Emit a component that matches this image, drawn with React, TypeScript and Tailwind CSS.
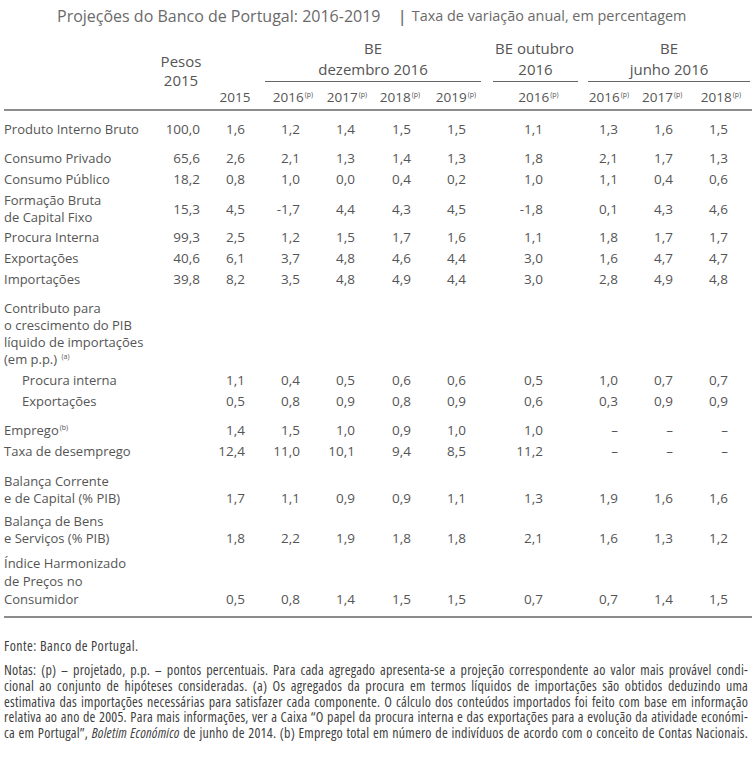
import React from "react";

type Row = {
  label: React.ReactNode[];
  v?: string[];
  mt?: string;
  indent?: boolean;
  align?: "center" | "end";
  lh?: string;
};

const numPad = [
  "pr-[12px]",
  "pr-[20px]",
  "pr-[19px]",
  "pr-[18px]",
  "pr-[16px]",
  "pr-[15px]",
  "pr-[45px]",
  "pr-[24px]",
  "pr-[23px]",
  "pr-[22px]",
];

const Sup = ({ t }: { t: string }) => (
  <span className="text-[7px] leading-none align-super ml-[1px]">{t}</span>
);

const rows: Row[] = [
  { label: ["Produto Interno Bruto"], v: ["100,0", "1,6", "1,2", "1,4", "1,5", "1,5", "1,1", "1,3", "1,6", "1,5"], mt: "mt-[8px]" },
  { label: ["Consumo Privado"], v: ["65,6", "2,6", "2,1", "1,3", "1,4", "1,3", "1,8", "2,1", "1,7", "1,3"], mt: "mt-[8px]" },
  { label: ["Consumo Público"], v: ["18,2", "0,8", "1,0", "0,0", "0,4", "0,2", "1,0", "1,1", "0,4", "0,6"] },
  { label: ["Formação Bruta", "de Capital Fixo"], v: ["15,3", "4,5", "-1,7", "4,4", "4,3", "4,5", "-1,8", "0,1", "4,3", "4,6"] },
  { label: ["Procura Interna"], v: ["99,3", "2,5", "1,2", "1,5", "1,7", "1,6", "1,1", "1,8", "1,7", "1,7"], mt: "-mt-[1px]" },
  { label: ["Exportações"], v: ["40,6", "6,1", "3,7", "4,8", "4,6", "4,4", "3,0", "1,6", "4,7", "4,7"] },
  { label: ["Importações"], v: ["39,8", "8,2", "3,5", "4,8", "4,9", "4,4", "3,0", "2,8", "4,9", "4,8"] },
  {
    label: [
      "Contributo para",
      "o crescimento do PIB",
      "líquido de importações",
      <>
        (em p.p.) <Sup t="(a)" />
      </>,
    ],
    mt: "mt-[8px]",
  },
  { label: ["Procura interna"], v: ["", "1,1", "0,4", "0,5", "0,6", "0,6", "0,5", "1,0", "0,7", "0,7"], indent: true },
  { label: ["Exportações"], v: ["", "0,5", "0,8", "0,9", "0,8", "0,9", "0,6", "0,3", "0,9", "0,9"], indent: true },
  {
    label: [
      <>
        Emprego
        <Sup t="(b)" />
      </>,
    ],
    v: ["", "1,4", "1,5", "1,0", "0,9", "1,0", "1,0", "–", "–", "–"],
    mt: "mt-[8px]",
  },
  { label: ["Taxa de desemprego"], v: ["", "12,4", "11,0", "10,1", "9,4", "8,5", "11,2", "–", "–", "–"] },
  { label: ["Balança Corrente", "e de Capital (% PIB)"], v: ["", "1,7", "1,1", "0,9", "0,9", "1,1", "1,3", "1,9", "1,6", "1,6"], mt: "mt-[9px]", align: "end" },
  { label: ["Balança de Bens", "e Serviços (% PIB)"], v: ["", "1,8", "2,2", "1,9", "1,8", "1,8", "2,1", "1,6", "1,3", "1,2"], mt: "mt-[2px]", align: "end" },
  { label: ["Índice Harmonizado", "de Preços no", "Consumidor"], v: ["", "0,5", "0,8", "1,4", "1,5", "1,5", "0,7", "0,7", "1,4", "1,5"], mt: "mt-[3px]", align: "end", lh: "leading-[18px]" },
];

const grid =
  "grid grid-cols-[146px_62px_53px_54px_54px_54px_54px_107px_54px_54px_54px]";

const years = ["2016", "2017", "2018", "2019", "2016", "2016", "2017", "2018"];
const yearPads = ["pl-[2px]", "pl-[2px]", "", "pl-[4px]", "pl-[8px]", "pr-[12px]", "pr-[16px]", "pr-[4px]"];

const notes: React.ReactNode[] = [
  "Notas: (p) – projetado, p.p. – pontos percentuais. Para cada agregado apresenta-se a projeção correspondente ao valor mais provável condi-",
  "cional ao conjunto de hipóteses consideradas. (a) Os agregados da procura em termos líquidos de importações são obtidos deduzindo uma",
  "estimativa das importações necessárias para satisfazer cada componente. O cálculo dos conteúdos importados foi feito com base em informação",
  "relativa ao ano de 2005. Para mais informações, ver a Caixa “O papel da procura interna e das exportações para a evolução da atividade económi-",
  <>
    ca em Portugal”, <i>Boletim Económico</i> de junho de 2014. (b) Emprego total em número de indivíduos de acordo com o conceito de Contas Nacionais.
  </>,
];

export default function App() {
  return (
    <div className="w-[756px] h-[757px] bg-white font-['Open_Sans',sans-serif] text-[#555] overflow-hidden">
      {/* Title */}
      <div className="flex items-center pl-[57px] pt-[4px] h-[36px] pb-[8px] text-[#6a6a6a] whitespace-nowrap">
        <span className="text-[16px] leading-[24px]">Projeções do Banco de Portugal: 2016-2019</span>
        <span className="text-[17px] leading-[24px] font-semibold ml-[17px] mr-[5px] text-[#777]">|</span>
        <span className="text-[14.4px] leading-[24px]">Taxa de variação anual, em percentagem</span>
      </div>

      <div className="px-[4px]">
        {/* Header */}
        <div className={`${grid} grid-rows-[20px_24px_27px] text-[15px] leading-[20px] border-b-2 border-[#8c8c8c] mt-[2px]`}>
          <div className="row-span-3" />
          <div className="row-span-3 flex flex-col items-center pt-[14px]">
            <span className="leading-[19px]">Pesos</span>
            <span className="leading-[18px]">2015</span>
          </div>
          <div className="row-span-2" />
          <div className="col-span-4 text-center">BE</div>
          <div className="text-center">BE outubro</div>
          <div className="col-span-3 text-center">BE</div>

          <div className="col-start-4 col-span-4 text-center pt-[1px] border-b border-[#666]">dezembro 2016</div>
          <div className="text-center pt-[1px] ml-[12px] mr-[10px] border-b border-[#666]">2016</div>
          <div className="col-span-3 text-center pt-[1px] border-b border-[#666]">junho 2016</div>

          <div className="col-start-3 text-center text-[13.5px] pt-[5px] pr-[7px]">2015</div>
          {years.map((y, i) => (
            <div key={i} className={`text-center text-[13.5px] pt-[5px] ${yearPads[i]}`}>
              {y}
              <Sup t="(p)" />
            </div>
          ))}
        </div>

        {/* Body */}
        <div className="text-[13px] leading-[17px] border-b-2 border-[#8c8c8c] pb-[6px]">
          {rows.map((r, ri) => (
            <div
              key={ri}
              className={`${grid} py-[2px] ${r.mt ?? ""} ${r.lh ?? ""} ${r.align === "end" ? "items-end" : "items-center"}`}
            >
              <div className={`flex flex-col whitespace-nowrap ${r.indent ? "pl-[18px]" : ""}`}>
                {r.label.map((l, li) => (
                  <span key={li}>{l}</span>
                ))}
              </div>
              {(r.v ?? []).map((val, vi) => (
                <div key={vi} className={`text-right text-[13.5px] ${numPad[vi]}`}>
                  {val}
                </div>
              ))}
            </div>
          ))}
        </div>

        {/* Notes */}
        <div className="mt-[20px] text-[14px] leading-[16px] text-[#3f3f3f] [font-stretch:75%] tracking-[0.45px]">
          <div>Fonte: Banco de Portugal.</div>
          <div className="mt-[8px] leading-[15.8px] pr-[4px] tracking-[0.2px]">
            {notes.map((n, i) => (
              <div key={i} className="whitespace-nowrap text-justify [text-align-last:justify]">
                {n}
              </div>
            ))}
          </div>
        </div>
      </div>
    </div>
  );
}
